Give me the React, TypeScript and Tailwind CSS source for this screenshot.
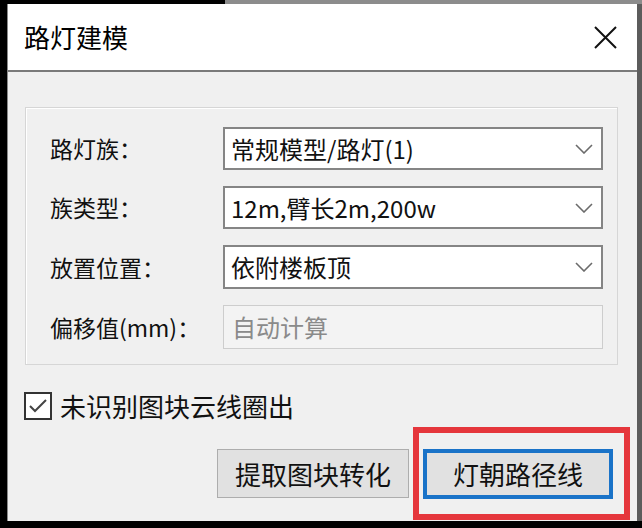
import { useState } from 'react';

const font = { fontFamily: '"Noto Sans CJK SC", "Noto Sans", sans-serif' };

function Chevron() {
  return (
    <svg width="18" height="10" viewBox="0 0 18 10" className="shrink-0">
      <polyline points="1,1 9,9 17,1" fill="none" stroke="#6b6b6b" strokeWidth="1.6" />
    </svg>
  );
}

function Select({ value }: { value: string }) {
  return (
    <div className="flex h-[43px] w-[380px] items-center justify-between border-2 border-[#858585] bg-white pl-[6px] pr-[8px]">
      <span className="text-[24px] leading-none text-[#111]">{value}</span>
      <Chevron />
    </div>
  );
}

function Row({ label, children }: { label: string; children: React.ReactNode }) {
  return (
    <div className="flex items-center">
      <div className="w-[173px] text-[23px] leading-none text-[#111]">{label}</div>
      {children}
    </div>
  );
}

export default function App() {
  const [checked, setChecked] = useState(true);

  return (
    <div className="flex h-[528px] w-[642px] flex-col overflow-hidden bg-black" style={font}>
      {/* 顶部边缘 */}
      <div className="flex h-[4px] shrink-0">
        <div className="w-[225px] bg-black" />
        <div className="flex-1 bg-[#8c8c8c]" />
      </div>

      <div className="flex min-h-0 flex-1">
        <div className="w-[7px] bg-black" />

        {/* 对话框 */}
        <div className="flex flex-1 flex-col border-l border-[#8a8a8a] bg-[#f0f0f0]">
          <div className="flex h-[66px] shrink-0 items-center justify-between bg-white pl-[16px] pr-[20px]">
            <span className="text-[26px] leading-none text-black">路灯建模</span>
            <svg width="23" height="23" viewBox="0 0 23 23">
              <path d="M1 1 L22 22 M22 1 L1 22" stroke="#111" strokeWidth="2" />
            </svg>
          </div>
          <div className="h-[2px] shrink-0 bg-[#7a7a7a]" />

          <div className="flex flex-1 flex-col">
            {/* 分组框 */}
            <div className="ml-[17px] mt-[35px] flex h-[258px] w-[593px] flex-col gap-[16px] border border-[#d6d6d6] pl-[24px] pt-[19px] shadow-[inset_1px_1px_0_#fff]">
              <Row label="路灯族：">
                <Select value="常规模型/路灯(1)" />
              </Row>
              <Row label="族类型：">
                <Select value="12m,臂长2m,200w" />
              </Row>
              <Row label="放置位置：">
                <div className="flex h-[44px] w-[380px] items-center justify-between border-2 border-[#858585] bg-white pl-[6px] pr-[8px]">
                  <span className="text-[24px] leading-none text-[#111]">依附楼板顶</span>
                  <Chevron />
                </div>
              </Row>
              <Row label="偏移值(mm)：">
                <div className="flex h-[44px] w-[380px] items-center border border-[#cdcdcd] bg-[#f3f3f3] pl-[8px]">
                  <span className="text-[24px] leading-none text-[#8a8a8a]">自动计算</span>
                </div>
              </Row>
            </div>

            {/* 复选框 */}
            <label
              className="ml-[16px] mt-[27px] flex w-fit cursor-default items-center gap-[8px]"
              onClick={() => setChecked(!checked)}
            >
              <span className="flex h-[28px] w-[28px] items-center justify-center border-2 border-[#333] bg-white">
                {checked && (
                  <svg width="20" height="16" viewBox="0 0 20 16">
                    <polyline points="2,8 7,13 18,2" fill="none" stroke="#444" strokeWidth="2" />
                  </svg>
                )}
              </span>
              <span className="text-[26px] leading-none text-[#111]">未识别图块云线圈出</span>
            </label>

            {/* 按钮 */}
            <div className="ml-[209px] mt-[29px] flex items-start gap-[14px]">
              <button className="flex h-[49px] w-[192px] items-center justify-center border border-[#adadad] bg-[#e1e1e1] text-[26px] leading-none text-[#111]">
                提取图块转化
              </button>
              <div className="relative">
                <button className="flex h-[50px] w-[190px] items-center justify-center border-[4px] border-[#1a73c8] bg-[#e1e1e1] text-[26px] leading-none text-[#111]">
                  灯朝路径线
                </button>
                <div className="pointer-events-none absolute -bottom-[21px] -left-[10px] -right-[17px] -top-[22px] border-[6px] border-[#e5363c]" />
              </div>
            </div>
          </div>
        </div>

        <div className="w-[5px] bg-[#5c5c5c]" />
      </div>

      <div className="h-[7px] shrink-0 bg-black" />
    </div>
  );
}
